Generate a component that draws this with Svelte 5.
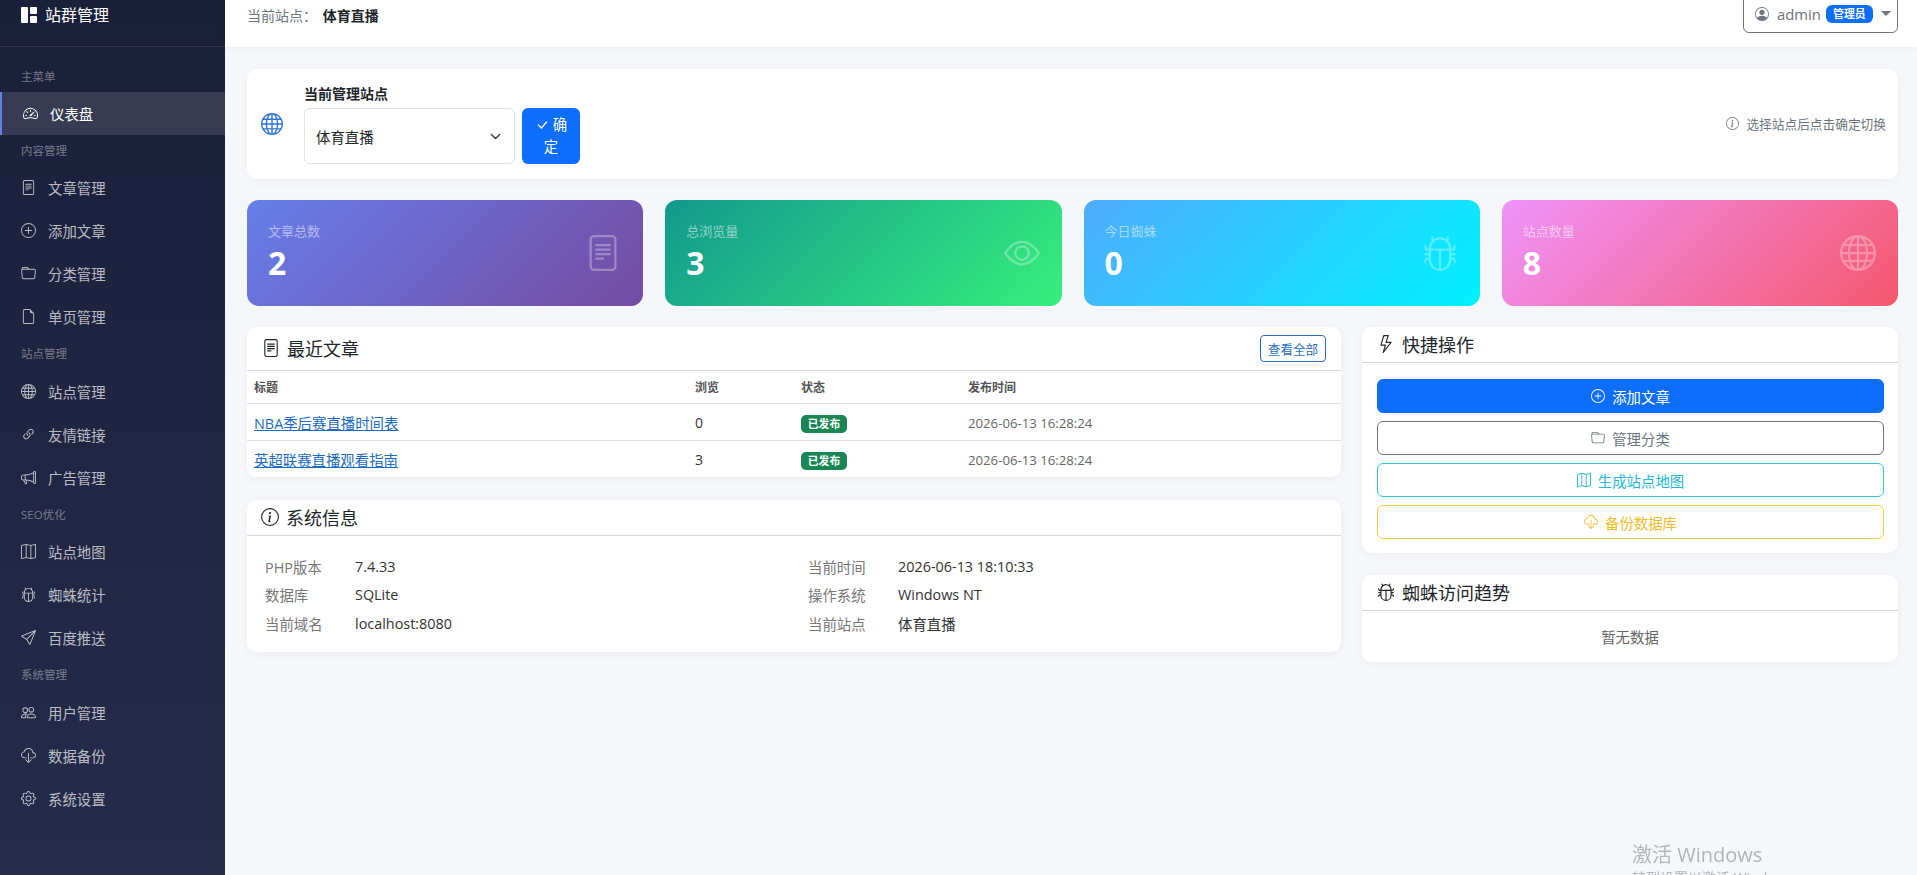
<script>
  const paths = {
    grid: 'M0 1a1 1 0 0 1 1-1h5a1 1 0 0 1 1 1v14a1 1 0 0 1-1 1H1a1 1 0 0 1-1-1V1zm9 0a1 1 0 0 1 1-1h5a1 1 0 0 1 1 1v5a1 1 0 0 1-1 1h-5a1 1 0 0 1-1-1V1zm0 9a1 1 0 0 1 1-1h5a1 1 0 0 1 1 1v5a1 1 0 0 1-1 1h-5a1 1 0 0 1-1-1v-5z',
    speed: 'M8 4a.5.5 0 0 1 .5.5V6a.5.5 0 0 1-1 0V4.5A.5.5 0 0 1 8 4zM3.732 5.732a.5.5 0 0 1 .707 0l.915.914a.5.5 0 1 1-.708.708l-.914-.915a.5.5 0 0 1 0-.707zM2 10a.5.5 0 0 1 .5-.5h1.586a.5.5 0 0 1 0 1H2.5A.5.5 0 0 1 2 10zm9.5 0a.5.5 0 0 1 .5-.5h1.5a.5.5 0 0 1 0 1H12a.5.5 0 0 1-.5-.5zm.754-4.246a.389.389 0 0 0-.527-.02L7.547 9.31a.91.91 0 1 0 1.302 1.258l3.434-4.297a.389.389 0 0 0-.029-.518z M0 10a8 8 0 1 1 15.547 2.661c-.442 1.253-1.845 1.602-2.932 1.25C11.309 13.488 9.475 13 8 13c-1.474 0-3.31.488-4.615.911-1.087.352-2.49.003-2.932-1.25A7.988 7.988 0 0 1 0 10zm8-7a7 7 0 0 0-6.603 9.329c.203.575.923.876 1.68.63C4.397 12.533 6.358 12 8 12s3.604.532 4.923.96c.757.245 1.477-.056 1.68-.631A7 7 0 0 0 8 3z',
    file: 'M5 4a.5.5 0 0 0 0 1h6a.5.5 0 0 0 0-1H5zm-.5 2.5A.5.5 0 0 1 5 6h6a.5.5 0 0 1 0 1H5a.5.5 0 0 1-.5-.5zM5 8a.5.5 0 0 0 0 1h6a.5.5 0 0 0 0-1H5zm0 2a.5.5 0 0 0 0 1h3a.5.5 0 0 0 0-1H5z M2 2a2 2 0 0 1 2-2h8a2 2 0 0 1 2 2v12a2 2 0 0 1-2 2H4a2 2 0 0 1-2-2V2zm10-1H4a1 1 0 0 0-1 1v12a1 1 0 0 0 1 1h8a1 1 0 0 0 1-1V2a1 1 0 0 0-1-1z',
    plus: 'M8 15A7 7 0 1 1 8 1a7 7 0 0 1 0 14zm0 1A8 8 0 1 0 8 0a8 8 0 0 0 0 16z M8 4a.5.5 0 0 1 .5.5v3h3a.5.5 0 0 1 0 1h-3v3a.5.5 0 0 1-1 0v-3h-3a.5.5 0 0 1 0-1h3v-3A.5.5 0 0 1 8 4z',
    folder: 'M.54 3.87.5 3a2 2 0 0 1 2-2h3.672a2 2 0 0 1 1.414.586l.828.828A2 2 0 0 0 9.828 3h3.982a2 2 0 0 1 1.992 2.181l-.637 7A2 2 0 0 1 13.174 14H2.826a2 2 0 0 1-1.991-1.819l-.637-7a1.99 1.99 0 0 1 .342-1.31zM2.19 4a1 1 0 0 0-.996 1.09l.637 7a1 1 0 0 0 .995.91h10.348a1 1 0 0 0 .995-.91l.637-7A1 1 0 0 0 13.81 4H2.19zm4.69-1.707A1 1 0 0 0 6.172 2H2.5a1 1 0 0 0-1 .981l.006.139C1.72 3.042 1.95 3 2.19 3h5.396l-.707-.707z',
    page: 'M14 4.5V14a2 2 0 0 1-2 2H4a2 2 0 0 1-2-2V2a2 2 0 0 1 2-2h5.5L14 4.5zm-3 0A1.5 1.5 0 0 1 9.5 3V1H4a1 1 0 0 0-1 1v12a1 1 0 0 0 1 1h8a1 1 0 0 0 1-1V4.5h-2z',
    globe: 'M0 8a8 8 0 1 1 16 0A8 8 0 0 1 0 8zm7.5-6.923c-.67.204-1.335.82-1.887 1.855A7.97 7.97 0 0 0 5.145 4H7.5V1.077zM4.09 4a9.267 9.267 0 0 1 .64-1.539 6.7 6.7 0 0 1 .597-.933A7.025 7.025 0 0 0 2.255 4H4.09zm-.582 3.5c.03-.877.138-1.718.312-2.5H1.674a6.958 6.958 0 0 0-.656 2.5h2.49zM4.847 5a12.5 12.5 0 0 0-.338 2.5H7.5V5H4.847zM8.5 5v2.5h2.99a12.495 12.495 0 0 0-.337-2.5H8.5zM4.51 8.5a12.5 12.5 0 0 0 .337 2.5H7.5V8.5H4.51zm3.99 0V11h2.653c.187-.765.306-1.608.338-2.5H8.5zM5.145 12c.138.386.295.744.468 1.068.552 1.035 1.218 1.65 1.887 1.855V12H5.145zm.182 2.472a6.696 6.696 0 0 1-.597-.933A9.268 9.268 0 0 1 4.09 12H2.255a7.024 7.024 0 0 0 3.072 2.472zM3.82 11a13.652 13.652 0 0 1-.312-2.5h-2.49c.062.89.291 1.733.656 2.5H3.82zm6.853 3.472A7.024 7.024 0 0 0 13.745 12H11.91a9.27 9.27 0 0 1-.64 1.539 6.688 6.688 0 0 1-.597.933zM8.5 12v2.923c.67-.204 1.335-.82 1.887-1.855.173-.324.33-.682.468-1.068H8.5zm3.68-1h2.146c.365-.767.594-1.61.656-2.5h-2.49a13.65 13.65 0 0 1-.312 2.5zm2.802-3.5a6.959 6.959 0 0 0-.656-2.5H12.18c.174.782.282 1.623.312 2.5h2.49zM11.27 2.461c.247.464.462.98.64 1.539h1.835a7.024 7.024 0 0 0-3.072-2.472c.218.284.418.598.597.933zM10.855 4a7.966 7.966 0 0 0-.468-1.068C9.835 1.897 9.17 1.282 8.5 1.077V4h2.355z',
    link: 'M4.715 6.542 3.343 7.914a3 3 0 1 0 4.243 4.243l1.828-1.829A3 3 0 0 0 8.586 5.5L8 6.086a1.002 1.002 0 0 0-.154.199 2 2 0 0 1 .861 3.337L6.88 11.45a2 2 0 1 1-2.83-2.83l.793-.792a4.018 4.018 0 0 1-.128-1.287z M6.586 4.672A3 3 0 0 0 7.414 9.5l.775-.776a2 2 0 0 1-.896-3.346L9.12 3.55a2 2 0 1 1 2.83 2.83l-.793.792c.112.42.155.855.128 1.287l1.372-1.372a3 3 0 1 0-4.243-4.243L6.586 4.672z',
    megaphone: 'M13 2.5a1.5 1.5 0 0 1 3 0v11a1.5 1.5 0 0 1-3 0v-.214c-2.162-1.241-4.49-1.843-6.912-2.083l.405 2.712A1 1 0 0 1 5.51 15.1h-.548a1 1 0 0 1-.916-.599l-1.85-3.49a68.14 68.14 0 0 0-.202-.003A2.014 2.014 0 0 1 0 9V7a2.02 2.02 0 0 1 1.992-2.013 74.663 74.663 0 0 0 2.483-.075c3.043-.154 6.148-.849 8.525-2.199V2.5zm1 0v11a.5.5 0 0 0 1 0v-11a.5.5 0 0 0-1 0zm-1 1.35c-2.344 1.205-5.209 1.842-8 2.033v4.233c.18.01.359.022.537.036 2.568.189 5.093.744 7.463 1.993V3.85zm-9 6.215v-4.13a95.09 95.09 0 0 1-1.992.052A1.02 1.02 0 0 0 1 7v2c0 .55.448 1.002 1.006 1.009A60.49 60.49 0 0 1 4 10.065zm-.657.975 1.609 3.037.01.024h.548l-.002-.014-.443-2.966a68.019 68.019 0 0 0-1.722-.082z',
    map: 'M15.817.113A.5.5 0 0 1 16 .5v14a.5.5 0 0 1-.402.49l-5 1a.502.502 0 0 1-.196 0L5.5 15.01l-4.902.98A.5.5 0 0 1 0 15.5v-14a.5.5 0 0 1 .402-.49l5-1a.5.5 0 0 1 .196 0L10.5.99l4.902-.98a.5.5 0 0 1 .415.103zM10 1.91l-4-.8v12.98l4 .8V1.91zm1 12.98 4-.8V1.11l-4 .8v12.98zm-6-.8V1.11l-4 .8v12.98l4-.8z',
    bug: 'M4.355.522a.5.5 0 0 1 .623.333l.291.956A4.979 4.979 0 0 1 8 1c1.007 0 1.946.298 2.731.811l.29-.956a.5.5 0 1 1 .957.29l-.41 1.352A4.985 4.985 0 0 1 13 6h.5a.5.5 0 0 0 .5-.5V5a.5.5 0 0 1 1 0v.5A1.5 1.5 0 0 1 13.5 7H13v1h1.5a.5.5 0 0 1 0 1H13v1h.5a1.5 1.5 0 0 1 1.5 1.5v.5a.5.5 0 1 1-1 0v-.5a.5.5 0 0 0-.5-.5H13a5 5 0 0 1-10 0h-.5a.5.5 0 0 0-.5.5v.5a.5.5 0 1 1-1 0v-.5A1.5 1.5 0 0 1 2.5 10H3V9H1.5a.5.5 0 0 1 0-1H3V7h-.5A1.5 1.5 0 0 1 1 5.5V5a.5.5 0 0 1 1 0v.5a.5.5 0 0 0 .5.5H3c0-1.364.547-2.601 1.432-3.503l-.41-1.352a.5.5 0 0 1 .333-.623zM4 7v4a4 4 0 0 0 3.5 3.97V7H4zm4.5 0v7.97A4 4 0 0 0 12 11V7H8.5zM12 6a3.989 3.989 0 0 0-1.334-2.982A3.983 3.983 0 0 0 8 2a3.983 3.983 0 0 0-2.667 1.018A3.989 3.989 0 0 0 4 6h8z',
    send: 'M15.854.146a.5.5 0 0 1 .11.54l-5.819 14.547a.75.75 0 0 1-1.329.124l-3.178-4.995L.643 7.184a.75.75 0 0 1 .124-1.33L15.314.037a.5.5 0 0 1 .54.11ZM6.636 10.07l2.761 4.338L14.13 2.576 6.636 10.07Zm6.787-8.201L1.591 6.602l4.339 2.76 7.494-7.493Z',
    people: 'M15 14s1 0 1-1-1-4-5-4-5 3-5 4 1 1 1 1h8zm-7.978-1A.261.261 0 0 1 7 12.996c.001-.264.167-1.03.76-1.72C8.312 10.629 9.282 10 11 10c1.717 0 2.687.63 3.24 1.276.593.69.758 1.457.76 1.72l-.008.002a.274.274 0 0 1-.014.002H7.022zM11 7a2 2 0 1 0 0-4 2 2 0 0 0 0 4zm3-2a3 3 0 1 1-6 0 3 3 0 0 1 6 0zM6.936 9.28a5.88 5.88 0 0 0-1.23-.247A7.35 7.35 0 0 0 5 9c-4 0-5 3-5 4 0 .667.333 1 1 1h4.216A2.238 2.238 0 0 1 5 13c0-1.01.377-2.042 1.09-2.904.243-.294.526-.569.846-.816zM4.92 10A5.493 5.493 0 0 0 4 13H1c0-.26.164-1.03.76-1.724.545-.636 1.492-1.256 3.16-1.275zM1.5 5.5a3 3 0 1 1 6 0 3 3 0 0 1-6 0zm3-2a2 2 0 1 0 0 4 2 2 0 0 0 0-4z',
    cloud: 'M4.406 1.342A5.53 5.53 0 0 1 8 0c2.69 0 4.923 2 5.166 4.579C14.758 4.804 16 6.137 16 7.773 16 9.569 14.502 11 12.687 11H10a.5.5 0 0 1 0-1h2.688C13.979 10 15 8.988 15 7.773c0-1.216-1.02-2.228-2.313-2.228h-.5v-.5C12.188 2.825 10.328 1 8 1a4.53 4.53 0 0 0-2.941 1.1c-.757.652-1.153 1.438-1.153 2.055v.448l-.445.049C2.064 4.805 1 5.952 1 7.318 1 8.785 2.23 10 3.781 10H6a.5.5 0 0 1 0 1H3.781C1.708 11 0 9.366 0 7.318c0-1.763 1.266-3.223 2.942-3.593.143-.863.698-1.723 1.464-2.383z M7.646 15.854a.5.5 0 0 0 .708 0l3-3a.5.5 0 0 0-.708-.708L8.5 14.293V5.5a.5.5 0 0 0-1 0v8.793l-2.146-2.147a.5.5 0 0 0-.708.708l3 3z',
    gear: 'M8 4.754a3.246 3.246 0 1 0 0 6.492 3.246 3.246 0 0 0 0-6.492zM5.754 8a2.246 2.246 0 1 1 4.492 0 2.246 2.246 0 0 1-4.492 0z M9.796 1.343c-.527-1.79-3.065-1.79-3.592 0l-.094.319a.873.873 0 0 1-1.255.52l-.292-.16c-1.64-.892-3.433.902-2.54 2.541l.159.292a.873.873 0 0 1-.52 1.255l-.319.094c-1.79.527-1.79 3.065 0 3.592l.319.094a.873.873 0 0 1 .52 1.255l-.16.292c-.892 1.64.901 3.434 2.541 2.54l.292-.159a.873.873 0 0 1 1.255.52l.094.319c.527 1.79 3.065 1.79 3.592 0l.094-.319a.873.873 0 0 1 1.255-.52l.292.16c1.64.893 3.434-.902 2.54-2.541l-.159-.292a.873.873 0 0 1 .52-1.255l.319-.094c1.79-.527 1.79-3.065 0-3.592l-.319-.094a.873.873 0 0 1-.52-1.255l.16-.292c.893-1.64-.902-3.433-2.541-2.54l-.292.159a.873.873 0 0 1-1.255-.52l-.094-.319zm-2.633.283c.246-.835 1.428-.835 1.674 0l.094.319a1.873 1.873 0 0 0 2.693 1.115l.291-.16c.764-.415 1.6.42 1.184 1.185l-.159.292a1.873 1.873 0 0 0 1.116 2.692l.318.094c.835.246.835 1.428 0 1.674l-.319.094a1.873 1.873 0 0 0-1.115 2.693l.16.291c.415.764-.42 1.6-1.185 1.184l-.291-.159a1.873 1.873 0 0 0-2.693 1.116l-.094.318c-.246.835-1.428.835-1.674 0l-.094-.319a1.873 1.873 0 0 0-2.692-1.115l-.292.16c-.764.415-1.6-.42-1.184-1.185l.159-.291A1.873 1.873 0 0 0 1.945 8.93l-.319-.094c-.835-.246-.835-1.428 0-1.674l.319-.094A1.873 1.873 0 0 0 3.06 4.377l-.16-.292c-.415-.764.42-1.6 1.185-1.184l.292.159a1.873 1.873 0 0 0 2.692-1.115l.094-.319z',
    person: 'M11 6a3 3 0 1 1-6 0 3 3 0 0 1 6 0z M0 8a8 8 0 1 1 16 0A8 8 0 0 1 0 8zm8-7a7 7 0 0 0-5.468 11.37C3.242 11.226 4.805 10 8 10s4.757 1.225 5.468 2.37A7 7 0 0 0 8 1z',
    info: 'M8 15A7 7 0 1 1 8 1a7 7 0 0 1 0 14zm0 1A8 8 0 1 0 8 0a8 8 0 0 0 0 16z M8.93 6.588l-2.29.287-.082.38.45.083c.294.07.352.176.288.469l-.738 3.468c-.194.897.105 1.319.808 1.319.545 0 1.178-.252 1.465-.598l.088-.42c-.2.176-.492.246-.686.246-.275 0-.375-.193-.304-.533L8.93 6.588zM9 4.5a1 1 0 1 1-2 0 1 1 0 0 1 2 0z',
    check: 'M12.736 3.97a.733.733 0 0 1 1.047 0c.286.289.29.756.01 1.05L7.88 12.01a.733.733 0 0 1-1.065.02L3.217 8.384a.757.757 0 0 1 0-1.06.733.733 0 0 1 1.047 0l3.052 3.093 5.4-6.425a.247.247 0 0 1 .02-.022Z',
    eye: 'M16 8s-3-5.5-8-5.5S0 8 0 8s3 5.5 8 5.5S16 8 16 8zM1.173 8a13.133 13.133 0 0 1 1.66-2.043C4.12 4.668 5.88 3.5 8 3.5c2.12 0 3.879 1.168 5.168 2.457A13.133 13.133 0 0 1 14.828 8c-.058.087-.122.183-.195.288-.335.48-.83 1.12-1.465 1.755C11.879 11.332 10.119 12.5 8 12.5c-2.12 0-3.879-1.168-5.168-2.457A13.134 13.134 0 0 1 1.172 8z M8 5.5a2.5 2.5 0 1 0 0 5 2.5 2.5 0 0 0 0-5zM4.5 8a3.5 3.5 0 1 1 7 0 3.5 3.5 0 0 1-7 0z',
    bolt: 'M5.52.359A.5.5 0 0 1 6 0h4a.5.5 0 0 1 .474.658L8.694 6H12.5a.5.5 0 0 1 .395.807l-7 9a.5.5 0 0 1-.873-.454L6.823 9.5H3.5a.5.5 0 0 1-.48-.641l2.5-8.5zM6.374 1 4.168 8.5H7.5a.5.5 0 0 1 .478.647L6.78 13.04 11.478 7H8a.5.5 0 0 1-.474-.658L9.306 1H6.374z'
  };

  const menu = [
    { title: '主菜单', items: [{ icon: 'speed', label: '仪表盘', active: true }] },
    { title: '内容管理', items: [
      { icon: 'file', label: '文章管理' },
      { icon: 'plus', label: '添加文章' },
      { icon: 'folder', label: '分类管理' },
      { icon: 'page', label: '单页管理' }
    ] },
    { title: '站点管理', items: [
      { icon: 'globe', label: '站点管理' },
      { icon: 'link', label: '友情链接' },
      { icon: 'megaphone', label: '广告管理' }
    ] },
    { title: 'SEO优化', items: [
      { icon: 'map', label: '站点地图' },
      { icon: 'bug', label: '蜘蛛统计' },
      { icon: 'send', label: '百度推送' }
    ] },
    { title: '系统管理', items: [
      { icon: 'people', label: '用户管理' },
      { icon: 'cloud', label: '数据备份' },
      { icon: 'gear', label: '系统设置' }
    ] }
  ];

  const stats = [
    { label: '文章总数', value: 2, icon: 'file', tone: 'purple' },
    { label: '总浏览量', value: 3, icon: 'eye', tone: 'green' },
    { label: '今日蜘蛛', value: 0, icon: 'bug', tone: 'blue' },
    { label: '站点数量', value: 8, icon: 'globe', tone: 'pink' }
  ];

  const articles = [
    { title: 'NBA季后赛直播时间表', views: 0, date: '2026-06-13 16:28:24' },
    { title: '英超联赛直播观看指南', views: 3, date: '2026-06-13 16:28:24' }
  ];

  const info = [
    ['PHP版本', '7.4.33', '当前时间', '2026-06-13 18:10:33'],
    ['数据库', 'SQLite', '操作系统', 'Windows NT'],
    ['当前域名', 'localhost:8080', '当前站点', '体育直播']
  ];

  const actions = [
    { icon: 'plus', label: '添加文章', tone: 'primary' },
    { icon: 'folder', label: '管理分类', tone: 'secondary' },
    { icon: 'map', label: '生成站点地图', tone: 'cyan' },
    { icon: 'cloud', label: '备份数据库', tone: 'amber' }
  ];
</script>

{#snippet icon(name, size)}
  <svg class="bi" width={size} height={size} viewBox="0 0 16 16" fill="currentColor" aria-hidden="true"><path d={paths[name]} /></svg>
{/snippet}

<div class="layout">
  <aside class="sidebar">
    <div class="brand">
      {@render icon('grid', 16)}
      <span>站群管理</span>
    </div>
    <nav>
      {#each menu as group}
        <div class="group-title">{group.title}</div>
        {#each group.items as item}
          <a class="nav-item" class:active={item.active} href="#/">
            {@render icon(item.icon, 15)}
            <span>{item.label}</span>
          </a>
        {/each}
      {/each}
    </nav>
  </aside>

  <div class="content">
    <header class="topbar">
      <div class="current">
        <span class="current-label">当前站点：</span>
        <strong>体育直播</strong>
      </div>
      <button class="user-btn">
        {@render icon('person', 14)}
        <span class="user-name">admin</span>
        <span class="role">管理员</span>
        <span class="caret"></span>
      </button>
    </header>

    <main>
      <section class="card switcher">
        <span class="switcher-globe">{@render icon('globe', 22)}</span>
        <div class="switcher-form">
          <div class="switcher-label">当前管理站点</div>
          <div class="switcher-row">
            <div class="select">
              <span>体育直播</span>
              <svg width="11" height="11" viewBox="0 0 16 16" fill="none" stroke="#343a40" stroke-width="2" stroke-linecap="round" stroke-linejoin="round"><path d="m2 5 6 6 6-6" /></svg>
            </div>
            <button class="confirm"><svg class="bi" width="14" height="14" viewBox="0 0 16 16" fill="currentColor"><path d={paths.check} /></svg> 确定</button>
          </div>
        </div>
        <div class="tip">
          {@render icon('info', 13)}
          <span>选择站点后点击确定切换</span>
        </div>
      </section>

      <section class="stats">
        {#each stats as stat}
          <div class="stat {stat.tone}">
            <div class="stat-text">
              <div class="stat-label">{stat.label}</div>
              <div class="stat-value">{stat.value}</div>
            </div>
            <span class="stat-icon">{@render icon(stat.icon, 36)}</span>
          </div>
        {/each}
      </section>

      <section class="columns">
        <div class="col-left">
          <div class="card panel">
            <div class="panel-head head-recent">
              <h2>{@render icon('file', 18)}<span>最近文章</span></h2>
              <button class="view-all">查看全部</button>
            </div>
            <table>
              <thead>
                <tr><th class="c1">标题</th><th class="c2">浏览</th><th class="c3">状态</th><th>发布时间</th></tr>
              </thead>
              <tbody>
                {#each articles as row}
                  <tr>
                    <td><a href="#/">{row.title}</a></td>
                    <td>{row.views}</td>
                    <td><span class="badge">已发布</span></td>
                    <td class="date">{row.date}</td>
                  </tr>
                {/each}
              </tbody>
            </table>
          </div>

          <div class="card panel">
            <div class="panel-head head-system">
              <h2>{@render icon('info', 18)}<span>系统信息</span></h2>
            </div>
            <div class="info">
              {#each info as row}
                <span class="info-key">{row[0]}</span>
                <span class="info-val">{row[1]}</span>
                <span class="info-key">{row[2]}</span>
                <span class="info-val">{row[3]}</span>
              {/each}
            </div>
          </div>
        </div>

        <div class="col-right">
          <div class="card panel">
            <div class="panel-head head-side">
              <h2>{@render icon('bolt', 18)}<span>快捷操作</span></h2>
            </div>
            <div class="actions">
              {#each actions as action}
                <button class="action {action.tone}">
                  {@render icon(action.icon, 14)}
                  <span>{action.label}</span>
                </button>
              {/each}
            </div>
          </div>

          <div class="card panel">
            <div class="panel-head head-side">
              <h2>{@render icon('bug', 18)}<span>蜘蛛访问趋势</span></h2>
            </div>
            <div class="empty">暂无数据</div>
          </div>
        </div>
      </section>
    </main>
  </div>
</div>

<div class="watermark">
  <div class="wm-title">激活 Windows</div>
  <div class="wm-sub">转到设置以激活 Windows。</div>
</div>

<style>
  :global(body) {
    margin: 0;
    background: #f5f7fb;
    overflow: hidden;
    font-family: "Open Sans", "Noto Sans CJK SC", sans-serif;
    font-size: 14px;
    color: #333;
  }

  .layout {
    display: flex;
    height: 875px;
    overflow: hidden;
  }

  .bi {
    flex: none;
    display: inline-block;
  }

  /* Sidebar */
  .sidebar {
    width: 225px;
    flex: none;
    background: linear-gradient(180deg, #1a1f3a 0%, #252b4a 100%);
    color: rgba(255, 255, 255, 0.7);
  }

  .brand {
    height: 46px;
    padding-left: 21px;
    border-bottom: 1px solid rgba(255, 255, 255, 0.1);
    display: flex;
    align-items: flex-start;
    gap: 8px;
    color: #fff;
    font-size: 16px;
    line-height: 30px;
  }

  .brand .bi {
    margin-top: 7px;
  }

  nav {
    padding-top: 13.6px;
  }

  .group-title {
    height: 31.4px;
    line-height: 31.4px;
    padding-left: 21px;
    font-size: 11.5px;
    color: rgba(255, 255, 255, 0.4);
  }

  .nav-item {
    height: 43px;
    display: flex;
    align-items: center;
    gap: 12px;
    padding-left: 21px;
    font-size: 14.4px;
    color: rgba(255, 255, 255, 0.7);
    text-decoration: none;
    box-sizing: border-box;
  }

  .nav-item.active {
    color: #fff;
    background: rgba(255, 255, 255, 0.12);
    border-left: 2px solid #667eea;
  }

  /* Top bar */
  .content {
    flex: 1;
    min-width: 0;
  }

  .topbar {
    height: 47px;
    background: #fff;
    box-shadow: 0 2px 10px rgba(0, 0, 0, 0.03);
    display: flex;
    justify-content: space-between;
    align-items: flex-start;
    padding: 0 19px 0 22px;
  }

  .current {
    line-height: 32px;
  }

  .current-label {
    color: #6c757d;
    margin-right: 2px;
  }

  .current strong {
    color: #212529;
    font-weight: 600;
  }

  .user-btn {
    margin-top: -6px;
    height: 39px;
    width: 155px;
    padding: 0 0 0 11px;
    box-sizing: border-box;
    display: flex;
    align-items: center;
    background: #fff;
    border: 1px solid #6c757d;
    border-radius: 6px;
    color: #6c757d;
    font-family: inherit;
    font-size: 14.8px;
  }

  .user-name {
    margin-left: 8px;
  }

  .role {
    flex: none;
    width: 47px;
    margin-left: 5px;
    height: 18px;
    line-height: 18px;
    text-align: center;
    white-space: nowrap;
    border-radius: 6px;
    background: #0d6efd;
    color: #fff;
    font-size: 10.8px;
    font-weight: 700;
  }

  .caret {
    margin-left: 8px;
    border-top: 5px solid #6c757d;
    border-left: 5px solid transparent;
    border-right: 5px solid transparent;
  }

  /* Main */
  main {
    padding: 22px 19px 0 22px;
  }

  .card {
    background: #fff;
    border-radius: 10px;
    box-shadow: 0 2px 12px rgba(0, 0, 0, 0.04);
  }

  .switcher {
    height: 110px;
    padding: 0 12px 0 14px;
    display: flex;
    align-items: center;
    box-sizing: border-box;
  }

  .switcher-globe {
    display: flex;
    color: #2f74d0;
    margin: 0 21px 0 0;
  }

  .switcher-label {
    font-size: 14px;
    font-weight: 600;
    line-height: 20px;
    color: #212529;
    margin-bottom: 4px;
  }

  .switcher-row {
    display: flex;
    gap: 7px;
  }

  .select {
    width: 211px;
    height: 56px;
    box-sizing: border-box;
    padding: 0 13px 0 11px;
    display: flex;
    align-items: center;
    justify-content: space-between;
    border: 1px solid #dee2e6;
    border-radius: 6px;
    font-size: 14.4px;
    color: #212529;
  }

  .confirm {
    width: 58px;
    height: 56px;
    padding: 0 12px;
    border: 0;
    border-radius: 6px;
    background: #0d6efd;
    color: #fff;
    font-family: inherit;
    font-size: 14.4px;
    line-height: 22px;
  }

  .confirm .bi {
    vertical-align: -2px;
  }

  .tip {
    margin-left: auto;
    margin-bottom: 2px;
    display: flex;
    align-items: center;
    gap: 7px;
    color: #6c757d;
    font-size: 12.7px;
  }

  /* Stat cards */
  .stats {
    display: grid;
    grid-template-columns: repeat(4, 1fr);
    gap: 22px;
    margin-top: 21px;
  }

  .stat {
    height: 106px;
    padding: 0 22px 0 21px;
    box-sizing: border-box;
    border-radius: 12px;
    display: flex;
    align-items: center;
    justify-content: space-between;
    color: #fff;
  }

  .purple { background: linear-gradient(135deg, #667eea 0%, #764ba2 100%); }
  .green { background: linear-gradient(135deg, #11998e 0%, #38ef7d 100%); }
  .blue { background: linear-gradient(135deg, #4facfe 0%, #00f2fe 100%); }
  .pink { background: linear-gradient(135deg, #f093fb 0%, #f5576c 100%); }

  .stat-text {
    padding-bottom: 2px;
  }

  .stat-label {
    font-size: 13px;
    line-height: 20px;
    opacity: 0.5;
  }

  .stat-value {
    font-size: 32px;
    font-weight: 700;
    line-height: 43px;
  }

  .stat-icon {
    display: flex;
    opacity: 0.3;
  }

  /* Panels */
  .columns {
    display: flex;
    gap: 21px;
    margin-top: 21px;
    align-items: flex-start;
  }

  .col-left {
    width: 1094px;
    display: flex;
    flex-direction: column;
    gap: 23px;
  }

  .col-right {
    flex: 1;
    min-width: 0;
    display: flex;
    flex-direction: column;
    gap: 22px;
  }

  .panel {
    overflow: hidden;
  }

  .panel-head {
    display: flex;
    align-items: center;
    justify-content: space-between;
    padding: 0 15px 2px 15px;
    box-sizing: border-box;
    border-bottom: 1px solid #d6d8dc;
  }

  .head-recent { height: 44px; padding-bottom: 0; }
  .head-recent h2 { margin-top: -2px; }
  .head-system { height: 36px; padding-left: 14px; }
  .head-side { height: 36px; }

  h2 {
    margin: 0;
    display: flex;
    align-items: center;
    gap: 7px;
    font-size: 18px;
    font-weight: 400;
    color: #212529;
  }

  .view-all {
    height: 27px;
    width: 66px;
    padding: 0;
    background: #fff;
    border: 1px solid #2a6fb8;
    border-radius: 4px;
    color: #2a6fb8;
    font-family: inherit;
    font-size: 12.6px;
  }

  table {
    width: 100%;
    border-collapse: collapse;
    table-layout: fixed;
  }

  th {
    height: 32px;
    padding: 0 7px;
    box-sizing: border-box;
    text-align: left;
    font-size: 12px;
    font-weight: 600;
    color: #555;
    border-bottom: 1px solid #dee2e6;
  }

  .c1 { width: 441px; }
  .c2 { width: 106px; }
  .c3 { width: 167px; }

  td {
    height: 37px;
    padding: 2px 7px 0;
    box-sizing: border-box;
    font-size: 14px;
    color: #333;
    border-bottom: 1px solid #dee2e6;
  }

  tbody tr:last-child td {
    border-bottom: 0;
  }

  td a {
    color: #1c6bc0;
    font-size: 14.4px;
  }

  td.date {
    color: #666;
    font-size: 13.2px;
  }

  .badge {
    display: inline-block;
    width: 46px;
    height: 18px;
    line-height: 18px;
    text-align: center;
    border-radius: 5px;
    background: #198754;
    color: #fff;
    font-size: 10.8px;
    font-weight: 700;
    vertical-align: middle;
  }

  .info {
    display: grid;
    grid-template-columns: 90px 453px 90px 1fr;
    grid-auto-rows: 28.5px;
    align-items: center;
    padding: 16px 0 14px 18px;
    font-size: 14.4px;
  }

  .info-key {
    color: #777;
  }

  .info-val {
    color: #333;
  }

  .actions {
    display: flex;
    flex-direction: column;
    gap: 8px;
    padding: 16px 14px 14px 15px;
  }

  .action {
    height: 34px;
    display: flex;
    align-items: center;
    justify-content: center;
    gap: 7px;
    background: #fff;
    border: 1px solid;
    border-radius: 6px;
    font-family: inherit;
    font-size: 14.4px;
  }

  .primary { background: #0d6efd; border-color: #0d6efd; color: #fff; }
  .secondary { border-color: #6c757d; color: #6c757d; }
  .cyan { border-color: #2dc3dc; color: #22b8d6; }
  .amber { border-color: #f7ca3e; color: #f0bc2a; }

  .empty {
    height: 51px;
    display: flex;
    align-items: center;
    justify-content: center;
    color: #666;
    font-size: 14.4px;
  }

  /* OS activation notice sits over the page */
  .watermark {
    position: fixed;
    left: 1632px;
    top: 841px;
    color: #b2b5bb;
    pointer-events: none;
  }

  .wm-title {
    font-size: 20px;
    line-height: 27px;
  }

  .wm-sub {
    font-size: 14px;
    line-height: 20px;
  }
</style>
